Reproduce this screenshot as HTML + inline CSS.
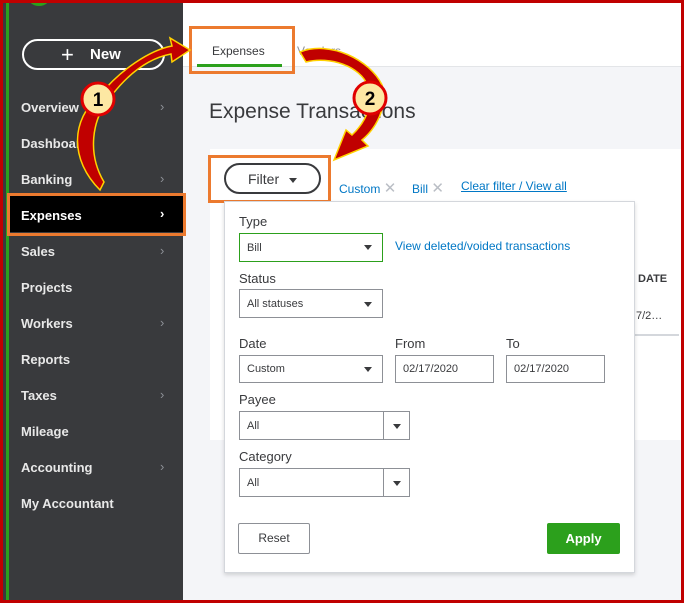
<html><head><style>
*{margin:0;padding:0;box-sizing:border-box}
body{width:684px;height:603px;position:relative;overflow:hidden;font-family:"Liberation Sans",sans-serif;background:#f4f5f8}
.abs{position:absolute}
.side{left:0;top:0;width:183px;height:603px;background:#393a3d}
.nav{position:absolute;left:21px;color:#e8e8e8;font-size:13px;font-weight:bold}
.chev{position:absolute;left:160px;color:#8d9096;font-size:13px}
.lbl{position:absolute;font-size:13px;color:#393a3d}
.box{position:absolute;border:1px solid #8d9096;background:#fff;font-size:11px;color:#393a3d;padding-left:7px;display:flex;align-items:center}
.tri{position:absolute;width:0;height:0;border-left:4px solid transparent;border-right:4px solid transparent;border-top:5px solid #393a3d}
.link{color:#0077c5;font-size:12px;position:absolute}
.orange{position:absolute;border:3px solid #ec7a2f}
</style></head><body>
<div class="abs side"></div>
<div class="abs" style="left:6px;top:0;width:3px;height:603px;background:#2ca01c"></div>
<div class="abs" style="left:28px;top:-12px;width:22px;height:18px;border-radius:50%;background:#2ca01c"></div>
<div class="abs" style="left:22px;top:39px;width:143px;height:31px;border:2px solid #fff;border-radius:16px;color:#fff;font-size:15px;font-weight:bold;padding:5px 0 0 38px"><span style="position:absolute;left:37px;top:1px;font-weight:normal;font-size:22px">+</span><span style="margin-left:28px">New</span></div>
<div class="nav" style="top:100px">Overview</div><div class="chev" style="top:99px">›</div>
<div class="nav" style="top:136px">Dashboard</div>
<div class="nav" style="top:172px">Banking</div><div class="chev" style="top:171px">›</div>
<div class="abs" style="left:9px;top:196px;width:174px;height:36px;background:#000"></div>
<div class="nav" style="top:208px;color:#fff">Expenses</div><div class="chev" style="top:206px;color:#fff;font-weight:bold">›</div>
<div class="nav" style="top:244px">Sales</div><div class="chev" style="top:243px">›</div>
<div class="nav" style="top:280px">Projects</div>
<div class="nav" style="top:316px">Workers</div><div class="chev" style="top:315px">›</div>
<div class="nav" style="top:352px">Reports</div>
<div class="nav" style="top:388px">Taxes</div><div class="chev" style="top:387px">›</div>
<div class="nav" style="top:424px">Mileage</div>
<div class="nav" style="top:460px">Accounting</div><div class="chev" style="top:459px">›</div>
<div class="nav" style="top:496px">My Accountant</div>
<div class="orange" style="left:7px;top:193px;width:179px;height:43px"></div>

<div class="abs" style="left:183px;top:0;width:501px;height:67px;background:#fff;border-bottom:1px solid #e3e5e8"></div>
<div class="abs" style="left:212px;top:44px;font-size:12px;color:#393a3d">Expenses</div>
<div class="abs" style="left:297px;top:44px;font-size:12px;color:#8d9096">Vendors</div>
<div class="abs" style="left:197px;top:64px;width:85px;height:3px;background:#2ca01c"></div>
<div class="orange" style="left:189px;top:26px;width:106px;height:48px"></div>
<div class="abs" style="left:209px;top:100px;font-size:21px;color:#393a3d">Expense Transactions</div>
<div class="abs" style="left:210px;top:149px;width:474px;height:291px;background:#fff"></div>
<div class="abs" style="left:224px;top:163px;width:97px;height:31px;border:2px solid #393a3d;border-radius:16px;font-size:14px;color:#393a3d;padding:6px 0 0 22px">Filter</div>
<div class="tri" style="left:289px;top:178px"></div>
<div class="orange" style="left:208px;top:155px;width:123px;height:48px"></div>
<div class="link" style="left:339px;top:179px">Custom <span style="color:#babec5;font-size:15px">✕</span></div>
<div class="link" style="left:412px;top:179px">Bill <span style="color:#babec5;font-size:15px">✕</span></div>
<div class="link" style="left:461px;top:179px;text-decoration:underline">Clear filter / View all</div>
<div class="abs" style="left:634px;top:268px;width:45px;height:68px;border-bottom:2px solid #d4d7dc;border-left:1px solid #e3e5e8"></div>
<div class="abs" style="left:638px;top:273px;font-size:11px;font-weight:bold;color:#393a3d">DATE</div>
<div class="abs" style="left:636px;top:310px;font-size:11px;color:#393a3d">7/2…</div>
<div class="abs" style="left:224px;top:201px;width:411px;height:372px;background:#fff;border:1px solid #d4d7dc;box-shadow:0 2px 4px rgba(0,0,0,.15)"></div>
<div class="lbl" style="left:239px;top:214px">Type</div>
<div class="box" style="left:239px;top:233px;width:144px;height:29px;border-color:#2ca01c">Bill</div><div class="tri" style="left:364px;top:245px"></div>
<div class="link" style="left:395px;top:239px">View deleted/voided transactions</div>
<div class="lbl" style="left:239px;top:271px">Status</div>
<div class="box" style="left:239px;top:289px;width:144px;height:29px">All statuses</div><div class="tri" style="left:364px;top:302px"></div>
<div class="lbl" style="left:239px;top:336px">Date</div>
<div class="lbl" style="left:395px;top:336px">From</div>
<div class="lbl" style="left:506px;top:336px">To</div>
<div class="box" style="left:239px;top:355px;width:144px;height:28px">Custom</div><div class="tri" style="left:364px;top:367px"></div>
<div class="box" style="left:395px;top:355px;width:99px;height:28px">02/17/2020</div>
<div class="box" style="left:506px;top:355px;width:99px;height:28px">02/17/2020</div>
<div class="lbl" style="left:239px;top:392px">Payee</div>
<div class="box" style="left:239px;top:411px;width:171px;height:29px">All</div><div class="abs" style="left:383px;top:412px;width:1px;height:27px;background:#8d9096"></div><div class="tri" style="left:393px;top:424px"></div>
<div class="lbl" style="left:239px;top:449px">Category</div>
<div class="box" style="left:239px;top:468px;width:171px;height:29px">All</div><div class="abs" style="left:383px;top:469px;width:1px;height:27px;background:#8d9096"></div><div class="tri" style="left:393px;top:481px"></div>
<div class="abs" style="left:238px;top:523px;width:72px;height:31px;border:1px solid #8d9096;border-radius:2px;font-size:12px;color:#393a3d;text-align:center;line-height:29px">Reset</div>
<div class="abs" style="left:547px;top:523px;width:73px;height:31px;background:#2ca01c;border-radius:2px;font-size:13px;font-weight:bold;color:#fff;text-align:center;line-height:31px">Apply</div>

<svg class="abs" style="left:0;top:0" width="684" height="603">
<g fill="#c00000" stroke="#ffd200" stroke-width="1.5">
<path d="M100 190 C70 160 70 120 100 95 C120 70 150 50 172 46 L170 38 L190 50 L172 62 L171 54 C150 58 130 72 112 95 C90 120 88 155 104 182 Z"/>
<path d="M300 52 C330 40 370 60 382 85 C388 100 380 125 362 140 L368 146 L334 160 L346 130 L352 135 C368 120 374 100 368 86 C360 66 330 56 306 62 Z"/>
</g>
<circle cx="98" cy="99" r="16" fill="#fde8a3" stroke="#e00000" stroke-width="3"/>
<text x="98" y="106" font-size="19" font-weight="bold" text-anchor="middle" font-family="Liberation Sans">1</text>
<circle cx="370" cy="98" r="16" fill="#fde8a3" stroke="#e00000" stroke-width="3"/>
<text x="370" y="105" font-size="19" font-weight="bold" text-anchor="middle" font-family="Liberation Sans">2</text>
<rect x="1.5" y="1.5" width="681" height="600" fill="none" stroke="#c00000" stroke-width="3"/>
</svg>
</body></html>
